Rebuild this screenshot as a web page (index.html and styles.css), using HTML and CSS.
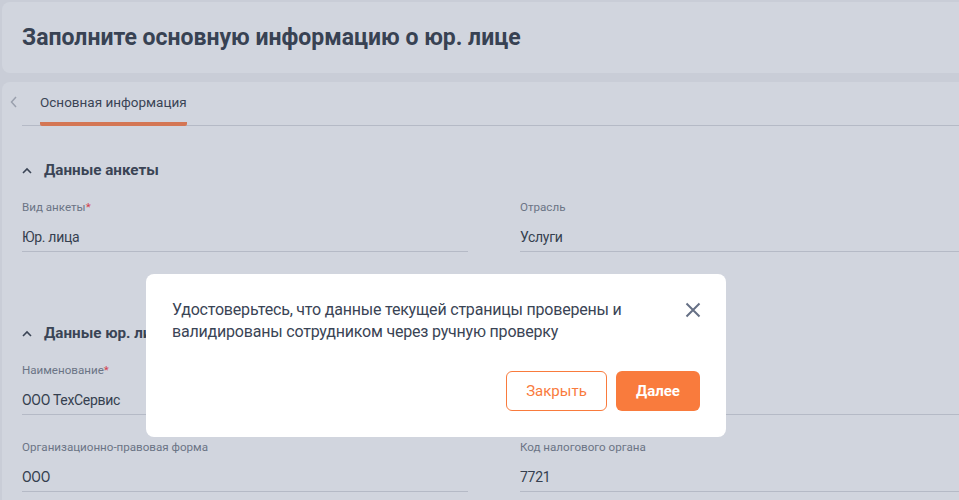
FILE: index.html
```html
<!DOCTYPE html>
<html lang="ru">
<head>
    <meta charset="UTF-8">
    <meta name="viewport" content="width=device-width, initial-scale=1.0">
    <title>Основная информация о юр. лице</title>
    <link rel="stylesheet" href="styles.css">
</head>
<body>
    <div class="page-header">
        <h1>Заполните основную информацию о юр. лице</h1>
    </div>

    <div class="card">
        <div class="tabs">
            <button class="tabs-back" aria-label="Назад">
                <svg width="8" height="12" viewBox="0 0 8 12"><path d="M6 1 1.5 6 6 11" fill="none" stroke="currentColor" stroke-width="1.5"/></svg>
            </button>
            <div class="tab active">Основная информация</div>
        </div>

        <div class="section">
            <div class="section-title">
                <svg width="10" height="7" viewBox="0 0 10 7"><path d="M1 6 5 2 9 6" fill="none" stroke="currentColor" stroke-width="1.6"/></svg>
                Данные анкеты
            </div>
            <div class="fields">
                <div class="field">
                    <div class="field-label">Вид анкеты<span class="req">*</span></div>
                    <div class="field-value">Юр. лица</div>
                </div>
                <div class="field">
                    <div class="field-label">Отрасль</div>
                    <div class="field-value">Услуги</div>
                </div>
            </div>
        </div>

        <div class="section section-second">
            <div class="section-title">
                <svg width="10" height="7" viewBox="0 0 10 7"><path d="M1 6 5 2 9 6" fill="none" stroke="currentColor" stroke-width="1.6"/></svg>
                Данные юр. лица
            </div>
            <div class="fields">
                <div class="field">
                    <div class="field-label">Наименование<span class="req">*</span></div>
                    <div class="field-value">ООО ТехСервис</div>
                </div>
                <!-- поле под модальным окном, пустое -->
                <div class="field">
                    <div class="field-label"></div>
                    <div class="field-value"></div>
                </div>
                <div class="field">
                    <div class="field-label">Организационно-правовая форма</div>
                    <div class="field-value">ООО</div>
                </div>
                <div class="field">
                    <div class="field-label">Код налогового органа</div>
                    <div class="field-value">7721</div>
                </div>
            </div>
        </div>
    </div>

    <div class="modal">
        <div class="modal-body">
            <p class="modal-text">Удостоверьтесь, что данные текущей страницы проверены и валидированы сотрудником через ручную проверку</p>
            <button class="modal-close" aria-label="Закрыть">
                <svg width="16" height="16" viewBox="0 0 16 16"><path d="M1.5 1.5 14.5 14.5M14.5 1.5 1.5 14.5" stroke="currentColor" stroke-width="2" fill="none"/></svg>
            </button>
        </div>
        <div class="modal-actions">
            <button class="btn btn-outline">Закрыть</button>
            <button class="btn btn-primary">Далее</button>
        </div>
    </div>
</body>
</html>
```

FILE: styles.css
```css
body {
    margin: 0;
    padding-top: 2px;
    font-family: Roboto, "Noto Sans", sans-serif;
    background: #c9cdd7;
    color: #3a4455;
    overflow: hidden;
    height: 498px;
}
.page-header {
    margin-left: 2px;
    height: 71px;
    background: #d1d5de;
    border-radius: 8px 0 0 8px;
    display: flex;
    align-items: center;
    padding-left: 20px;
}
.page-header h1 {
    margin: 0;
    font-size: 23px;
    font-weight: 700;
    color: #384253;
}
.card {
    margin: 9px 0 0 2px;
    background: #d1d5de;
    border-radius: 8px 0 0 0;
    padding-bottom: 40px;
}
.tabs {
    display: flex;
    align-items: stretch;
    height: 43px;
    margin-left: 20px;
    border-bottom: 1px solid #b5bac6;
    position: relative;
}
.tabs-back {
    position: absolute;
    left: -12px;
    top: 14px;
    border: none;
    background: none;
    padding: 0;
    color: #9aa0ad;
    cursor: pointer;
}
.tab {
    margin-left: 18px;
    padding: 12px 0 0;
    font-size: 13.5px;
    color: #3a4455;
    box-sizing: border-box;
}
.tab.active {
    border-bottom: 4px solid #d47654;
    border-radius: 2px;
    margin-bottom: -1px;
}
.section {
    padding: 0 0 0 20px;
}
.section-title {
    display: flex;
    align-items: center;
    gap: 12px;
    margin-top: 34px;
    height: 20px;
    font-size: 15.2px;
    font-weight: 700;
    color: #3a4455;
}
.section-second .section-title {
    margin-top: 71px;
}
.fields {
    display: grid;
    grid-template-columns: 446px 446px;
    column-gap: 52px;
    row-gap: 24px;
    margin-top: 19px;
}
.field {
    border-bottom: 1px solid #b5bac6;
    padding-bottom: 4px;
}
.field-label {
    height: 16px;
    font-size: 11.6px;
    line-height: 16px;
    color: #6b7485;
}
.req {
    color: #d2414f;
}
.field-value {
    height: 20px;
    margin-top: 12px;
    font-size: 14px;
    line-height: 20px;
    letter-spacing: -0.3px;
    color: #353f4f;
}
.modal {
    position: absolute;
    left: 146px;
    top: 274px;
    width: 580px;
    box-sizing: border-box;
    background: #fff;
    border-radius: 8px;
    padding: 25px 26px 26px;
}
.modal-body {
    display: flex;
    justify-content: space-between;
    align-items: flex-start;
}
.modal-text {
    margin: 0;
    max-width: 470px;
    font-size: 16px;
    line-height: 22px;
    letter-spacing: -0.2px;
    color: #3a4455;
}
.modal-close {
    border: none;
    background: none;
    padding: 0;
    margin: 3px -1px 0 0;
    color: #667085;
    cursor: pointer;
}
.modal-actions {
    display: flex;
    justify-content: flex-end;
    gap: 9px;
    margin-top: 28px;
}
.btn {
    height: 40px;
    border-radius: 6px;
    font-family: inherit;
    font-size: 15px;
    cursor: pointer;
    box-sizing: border-box;
}
.btn-outline {
    width: 101px;
    background: #fff;
    border: 1px solid #f97b3d;
    color: #f97b3d;
}
.btn-primary {
    width: 84px;
    background: #f97b3d;
    border: none;
    color: #fff;
    font-weight: 700;
}
```
